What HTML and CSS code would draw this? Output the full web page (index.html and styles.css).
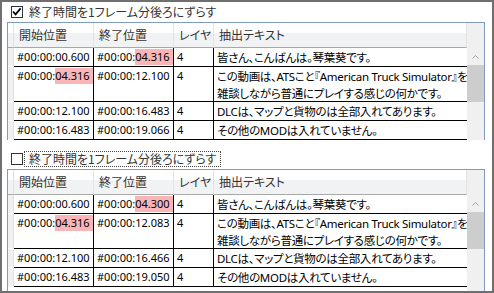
FILE: index.html
```html
<!DOCTYPE html>
<html lang="ja">
<head>
    <meta charset="UTF-8">
    <title>終了時間の比較</title>
    <link rel="stylesheet" href="styles.css">
</head>
<body>
    <div class="frame">
        <!-- 1フレーム分ずらした場合 -->
        <section class="panel">
            <div class="check-row">
                <span class="box">
                    <svg width="10" height="10" viewBox="0 0 10 10"><polyline points="1,4.5 3.6,7.4 8.6,1.4" fill="none" stroke="#000" stroke-width="1.7"/></svg>
                </span>
                <span class="check-label">終了時間を1フレーム分後ろにずらす</span>
            </div>
            <div class="grid grid-top">
                <div class="rows">
                    <div class="row head">
                        <div class="rowhead"></div>
                        <div class="cell">開始位置</div>
                        <div class="cell">終了位置</div>
                        <div class="cell">レイヤ</div>
                        <div class="cell">抽出テキスト</div>
                    </div>
                    <div class="row">
                        <div class="rowhead"></div>
                        <div class="cell time">#00:00:00.600</div>
                        <div class="cell time">#00:00:<span class="diff">04.316</span></div>
                        <div class="cell time">4</div>
                        <div class="cell text">皆さん、こんばんは。琴葉葵です。</div>
                    </div>
                    <div class="row tall">
                        <div class="rowhead"></div>
                        <div class="cell time">#00:00:<span class="diff">04.316</span></div>
                        <div class="cell time">#00:00:12.100</div>
                        <div class="cell time">4</div>
                        <div class="cell text">この動画は、<span class="latin">ATS</span>こと『<span class="latin">American Truck Simulator</span>』を<br>雑談しながら普通にプレイする感じの何かです。</div>
                    </div>
                    <div class="row">
                        <div class="rowhead"></div>
                        <div class="cell time">#00:00:12.100</div>
                        <div class="cell time">#00:00:16.483</div>
                        <div class="cell time">4</div>
                        <div class="cell text"><span class="latin">DLC</span>は、マップと貨物のは全部入れてあります。</div>
                    </div>
                    <div class="row">
                        <div class="rowhead"></div>
                        <div class="cell time">#00:00:16.483</div>
                        <div class="cell time">#00:00:19.066</div>
                        <div class="cell time">4</div>
                        <div class="cell text">その他の<span class="latin">MOD</span>は入れていません。</div>
                    </div>
                </div>
                <div class="vscroll">
                    <div class="vscroll-head"></div>
                    <div class="vscroll-btn">
                        <svg width="7" height="4" viewBox="0 0 7 4"><polyline points="0.5,3.5 3.5,0.5 6.5,3.5" fill="none" stroke="#a3a3a3" stroke-width="1"/></svg>
                    </div>
                    <div class="vscroll-thumb"></div>
                </div>
            </div>
        </section>

        <!-- ずらさない場合 -->
        <section class="panel panel-second">
            <div class="check-row">
                <span class="box"></span>
                <span class="check-label focused">終了時間を1フレーム分後ろにずらす</span>
            </div>
            <div class="grid grid-bottom">
                <div class="rows">
                    <div class="row head">
                        <div class="rowhead"></div>
                        <div class="cell">開始位置</div>
                        <div class="cell">終了位置</div>
                        <div class="cell">レイヤ</div>
                        <div class="cell">抽出テキスト</div>
                    </div>
                    <div class="row">
                        <div class="rowhead"></div>
                        <div class="cell time">#00:00:00.600</div>
                        <div class="cell time">#00:00:<span class="diff">04.300</span></div>
                        <div class="cell time">4</div>
                        <div class="cell text">皆さん、こんばんは。琴葉葵です。</div>
                    </div>
                    <div class="row tall">
                        <div class="rowhead"></div>
                        <div class="cell time">#00:00:<span class="diff">04.316</span></div>
                        <div class="cell time">#00:00:12.083</div>
                        <div class="cell time">4</div>
                        <div class="cell text">この動画は、<span class="latin">ATS</span>こと『<span class="latin">American Truck Simulator</span>』を<br>雑談しながら普通にプレイする感じの何かです。</div>
                    </div>
                    <div class="row">
                        <div class="rowhead"></div>
                        <div class="cell time">#00:00:12.100</div>
                        <div class="cell time">#00:00:16.466</div>
                        <div class="cell time">4</div>
                        <div class="cell text"><span class="latin">DLC</span>は、マップと貨物のは全部入れてあります。</div>
                    </div>
                    <div class="row">
                        <div class="rowhead"></div>
                        <div class="cell time">#00:00:16.483</div>
                        <div class="cell time">#00:00:19.050</div>
                        <div class="cell time">4</div>
                        <div class="cell text">その他の<span class="latin">MOD</span>は入れていません。</div>
                    </div>
                </div>
                <div class="vscroll">
                    <div class="vscroll-head"></div>
                    <div class="vscroll-btn">
                        <svg width="7" height="4" viewBox="0 0 7 4"><polyline points="0.5,3.5 3.5,0.5 6.5,3.5" fill="none" stroke="#a3a3a3" stroke-width="1"/></svg>
                    </div>
                    <div class="vscroll-thumb"></div>
                </div>
            </div>
        </section>
    </div>
</body>
</html>
```

FILE: styles.css
```css
body {
    margin: 0;
    font-family: "Noto Sans CJK JP", "Noto Sans", sans-serif;
    font-size: 12px;
    font-feature-settings: "palt";
    color: #000;
    background: #fff;
}

.frame {
    width: 494px;
    height: 293px;
    box-sizing: border-box;
    border: 2px solid #6f6f6f;
    background: #fff;
    overflow: hidden;
}

.panel-second {
    margin-top: 9px;
}

.check-row {
    height: 20px;
    display: flex;
    align-items: center;
    padding-left: 9px;
}

.box {
    width: 12px;
    height: 12px;
    box-sizing: border-box;
    border: 1px solid #333;
    background: #fff;
    display: flex;
    align-items: center;
    justify-content: center;
}

.check-label {
    margin-left: 1px;
    padding: 0 4px;
    height: 14px;
    line-height: 14px;
    border: 1px dotted transparent;
    color: #333;
}

.check-label.focused {
    border-color: #444;
}

.grid {
    display: flex;
    margin: 0 7px 0 5px;
    border: 1px solid #7f9cc0;
    border-bottom: none;
    overflow: hidden;
}

.grid-top {
    height: 117px;
}

.grid-bottom {
    height: 121px;
}

.rows {
    flex: 1;
    overflow: hidden;
}

.row {
    display: grid;
    grid-template-columns: 6px 80px 80px 40px 1fr;
    height: 19px;
}

.row.tall {
    height: 35px;
}

.row.head {
    height: 25px;
    background: linear-gradient(#fff 0%, #fff 40%, #f1f2f4 41%, #f1f2f4 100%);
    color: #333;
}

.rowhead {
    background: #f0f0f0;
    border-right: 1px solid #e2e2e2;
    border-bottom: 1px solid #fafafa;
}

.head .rowhead {
    background: transparent;
    border-bottom: 1px solid #a8a8a8;
}

.cell {
    box-sizing: border-box;
    padding: 1px 0 0 3px;
    line-height: 16px;
    white-space: nowrap;
    overflow: hidden;
    border-right: 1px solid #000;
    border-bottom: 1px solid #000;
}

.cell:last-child {
    border-right: none;
}

.head .cell {
    padding: 4px 0 0 5px;
    border-right: 1px solid #e3e3e3;
    border-bottom: 1px solid #a8a8a8;
}

.cell.text {
    font-size: 11.5px;
    letter-spacing: -0.3px;
}

.time,
.latin {
    font-family: "Noto Sans", sans-serif;
    font-size: 11px;
}

.latin {
    font-size: 11.5px;
}

.diff {
    display: inline-block;
    background: #fab6b6;
    padding-right: 3px;
}

.vscroll {
    width: 17px;
    background: #f0f0f0;
    display: flex;
    flex-direction: column;
}

.vscroll-head {
    height: 25px;
}

.vscroll-btn {
    height: 17px;
    display: flex;
    align-items: center;
    justify-content: center;
}

.vscroll-thumb {
    height: 37px;
    background: #cdcdcd;
}
```
